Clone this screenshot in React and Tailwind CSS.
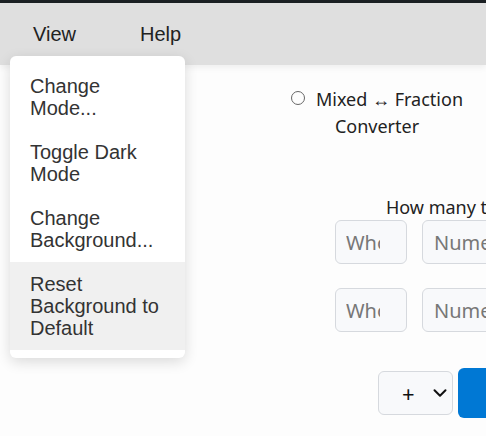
import { ChevronDown } from "lucide-react";

const menuItems = [
  "Change Mode...",
  "Toggle Dark Mode",
  "Change Background...",
  "Reset Background to Default",
];

function ViewMenu() {
  return (
    <div className="absolute left-[10px] top-[56px] w-[175px] rounded-md bg-white py-2 shadow-[0_4px_14px_rgba(0,0,0,0.14)] font-['Liberation_Sans',Arial,sans-serif] text-[20px] leading-[22px] text-[#333]">
      {menuItems.map((item, i) => (
        <div
          key={item}
          className={`px-5 py-[11px] pr-6 ${i === 3 ? "bg-[#f0f0f0]" : ""}`}
        >
          {item}
        </div>
      ))}
    </div>
  );
}

function FieldRow() {
  return (
    <div className="flex gap-[15px]">
      <input
        placeholder="Whole"
        className="h-[44px] w-[72px] shrink-0 rounded-md border border-[#d6d9de] bg-[#f8f9fb] pl-[10px] pr-[26px] text-[20px] placeholder:text-[#777] outline-none"
      />
      <input
        placeholder="Numerator"
        className="h-[44px] w-[120px] shrink-0 rounded-md border border-[#d6d9de] bg-[#f8f9fb] pl-[11px] pr-[10px] text-[20px] placeholder:text-[#777] outline-none"
      />
    </div>
  );
}

export default function App() {
  return (
    <div className="relative h-[436px] w-[486px] overflow-hidden bg-[#fdfdfd]">
      <div className="h-[3px] bg-[#1b2023]" />
      <nav className="flex h-[62px] items-center bg-[#dfdfdf] pl-[33px] font-['Liberation_Sans',Arial,sans-serif] text-[20px] text-[#222] shadow-[0_3px_6px_rgba(0,0,0,0.06)]">
        <span>View</span>
        <span className="ml-[64px]">Help</span>
      </nav>

      <main className="font-['Noto_Sans',sans-serif] text-[#222]">
        <div className="ml-[284px] mt-[21px] w-[186px] text-center text-[18px] leading-[27px]">
          <span className="mr-[11px] inline-block h-[14px] w-[14px] rounded-full border border-[#666] align-[1px]" />
          Mixed ↔ Fraction Converter
        </div>

        <div className="ml-[386px] mt-[55px] whitespace-nowrap text-[18px] leading-[24px]">
          How many times?
        </div>
        <div className="ml-[335px] mt-[1px] flex flex-col gap-[24px]">
          <FieldRow />
          <FieldRow />
        </div>

        <div className="ml-[378px] mt-[36px] flex items-center gap-[5px]">
          <div className="flex h-[44px] w-[75px] shrink-0 items-center justify-between rounded-md border border-[#d6d9de] bg-[#f8f9fb] pl-[23px] pr-[1px] text-[22px] text-[#111]">
            <span className="leading-none">+</span>
            <ChevronDown size={22} strokeWidth={2.2} />
          </div>
          <div className="h-[50px] w-[100px] shrink-0 rounded-md bg-[#0078d4]" />
        </div>
      </main>

      <ViewMenu />
    </div>
  );
}
